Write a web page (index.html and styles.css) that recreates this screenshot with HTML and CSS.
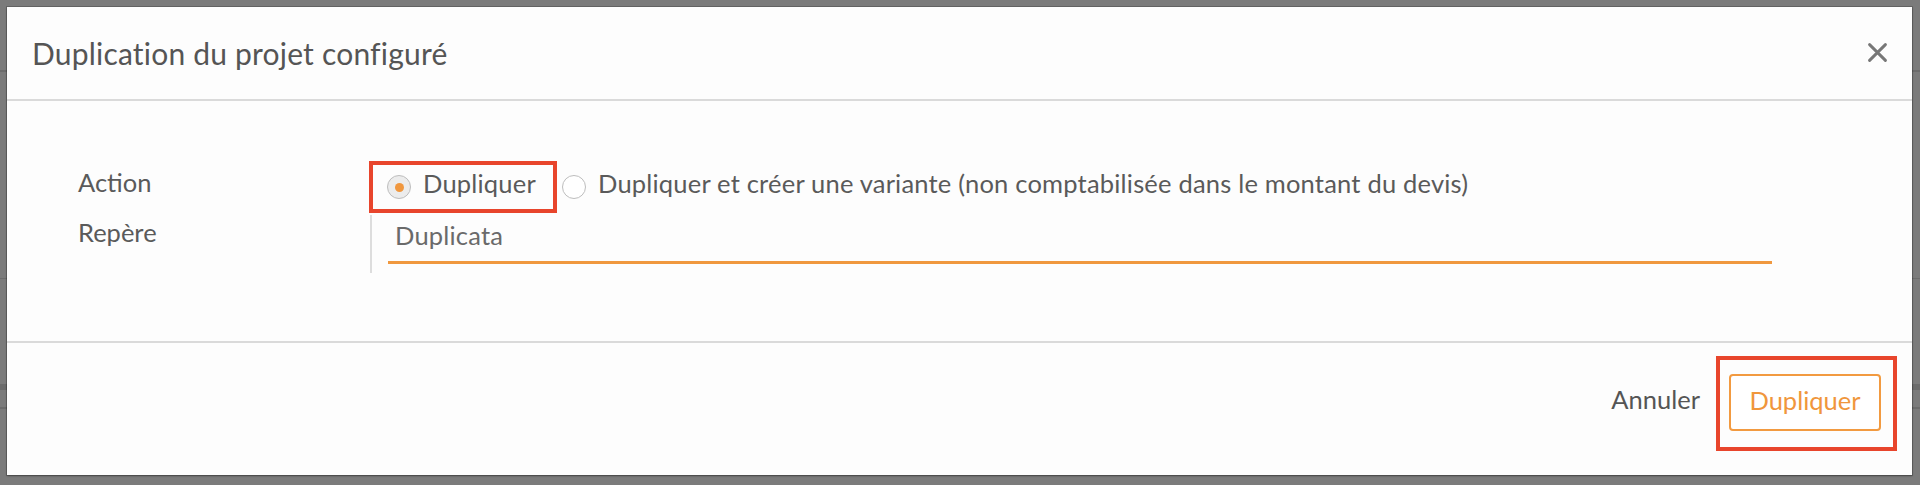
FILE: index.html
```html
<!DOCTYPE html>
<html lang="fr">
<head>
<meta charset="utf-8">
<title>Duplication du projet configuré</title>
<link rel="stylesheet" href="styles.css">
</head>
<body>
<div class="backdrop">
  <div class="bg-row bg-r1"></div>
  <div class="bg-row bg-r2"></div>
  <div class="bg-row bg-r3"></div>
  <div class="bg-row bg-r4"></div>
</div>
<div class="modal">
  <div class="modal-header">
    <h1 class="modal-title">Duplication du projet configuré</h1>
    <button class="close-btn" aria-label="Fermer">
      <svg width="19" height="19" viewBox="0 0 19 19"><path d="M1.6 1.6 L17.4 17.4 M17.4 1.6 L1.6 17.4" stroke="#777" stroke-width="2.9" stroke-linecap="round" fill="none"/></svg>
    </button>
  </div>
  <div class="modal-body">
    <div class="form-grid">
      <div class="label">Action</div>
      <div class="field-radios">
        <label class="option option-marked">
          <span class="radio radio-checked"><span class="dot"></span></span>
          <span class="option-text">Dupliquer</span>
        </label>
        <label class="option option-second">
          <span class="radio"></span>
          <span class="option-text">Dupliquer et créer une variante (non comptabilisée dans le montant du devis)</span>
        </label>
      </div>
      <div class="label">Repère</div>
      <div class="field-input">
        <div class="input">Duplicata</div>
      </div>
    </div>
  </div>
  <div class="modal-footer">
    <button class="btn-cancel">Annuler</button>
    <div class="mark-box">
      <button class="btn-primary">Dupliquer</button>
    </div>
  </div>
</div>
</body>
</html>
```
FILE: styles.css
```css
* { box-sizing: border-box; }
html, body { margin: 0; padding: 0; }
body {
  width: 1920px;
  height: 485px;
  overflow: hidden;
  background: #7b7b7b;
  font-family: "Lato", "Open Sans", sans-serif;
  position: relative;
}
.backdrop { height: 485px; }
.bg-row { border-bottom: 2px solid #6c6c6c; }
.bg-r1 { height: 72px; }
.bg-r2 { height: 207px; border-bottom-width: 1px; }
.bg-r3 { height: 111px; border-bottom: 6px solid #6b6b6b; }
.bg-r4 { height: 19px; border-bottom: 2px solid #6c6c6c; }

.modal {
  position: absolute;
  top: 7px;
  left: 7px;
  width: 1905px;
  height: 468px;
  background: #fdfdfd;
  box-shadow: 0 0 0 1px rgba(0,0,0,0.18), 0 1px 2px rgba(0,0,0,0.35);
  display: flex;
  flex-direction: column;
}
.modal-header {
  height: 94px;
  border-bottom: 2px solid #dadada;
  display: flex;
  align-items: center;
  justify-content: space-between;
  padding: 0 25px 0 25px;
}
.modal-title {
  margin: 0;
  font-weight: 400;
  font-size: 30px;
  letter-spacing: 0.2px;
  color: #555;
  line-height: 34px;
}
.close-btn {
  border: 0;
  background: none;
  padding: 0;
  width: 19px;
  height: 19px;
  display: block;
  margin-top: -1px;
}
.close-btn svg { display: block; }

.modal-body {
  height: 242px;
  border-bottom: 2px solid #dadada;
  padding: 64px 0 0 71px;
}
.form-grid {
  display: grid;
  grid-template-columns: 292px 1fr;
  grid-template-rows: 44px 58px;
  row-gap: 6px;
}
.label {
  font-size: 25.5px;
  line-height: 30px;
  color: #5a5a5a;
  padding-top: 2px;
}
.field-radios {
  display: flex;
  align-items: flex-start;
}
.option {
  display: flex;
  align-items: center;
  height: 44px;
  font-size: 25.5px;
  letter-spacing: 0.2px;
  color: #5a5a5a;
}
.option-marked {
  margin-left: 3px;
  width: 180px;
  padding-left: 14px;
  outline: 4px solid #e8452c;
}
.option-second {
  margin-left: 9px;
}
.radio {
  width: 24px;
  height: 24px;
  border-radius: 50%;
  border: 1.5px solid #bdbdbd;
  background: #fff;
  display: flex;
  align-items: center;
  justify-content: center;
  flex: none;
  margin-right: 12px;
}
.radio-checked {
  background: #ececec;
}
.dot {
  width: 9px;
  height: 9px;
  border-radius: 50%;
  background: #f0973e;
}
.option-text {
  line-height: 30px;
  padding-bottom: 9px;
  white-space: nowrap;
}
.field-input {
  border-left: 2px solid #dddddd;
  padding: 5px 0 0 16px;
}
.input {
  width: 1384px;
  height: 44px;
  line-height: 31px;
  padding: 0 0 10px 7px;
  border-bottom: 3px solid #f0983f;
  font-size: 25.5px;
  letter-spacing: 0.2px;
  color: #6a6a6a;
}

.modal-footer {
  flex: 1;
  display: flex;
  justify-content: flex-end;
  align-items: flex-start;
  padding: 13px 15px 0 0;
}
.btn-cancel {
  border: 0;
  background: none;
  padding: 0;
  margin: 28px 16px 0 0;
  font-family: inherit;
  font-size: 25.5px;
  line-height: 30px;
  color: #555;
}
.mark-box {
  border: 4px solid #e8452c;
  padding: 14px 12px 16px 9px;
}
.btn-primary {
  display: block;
  width: 152px;
  height: 57px;
  border: 2px solid #f29a40;
  border-radius: 4px;
  background: #fff;
  color: #f0963c;
  font-family: inherit;
  font-size: 25.5px;
  line-height: 30px;
  padding: 0 0 6px 0;
}
```
